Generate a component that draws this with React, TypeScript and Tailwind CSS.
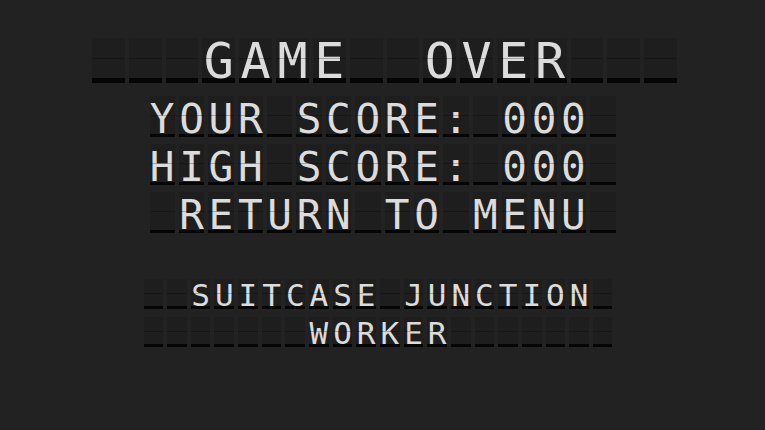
import React from 'react';

type BoardProps = {
    text: string;
    cols: string;
    cell: string;
    glyph: string;
};

function Board({ text, cols, cell, glyph }: BoardProps) {
    return (
        <div className={`grid gap-1 ${cols}`}>
            {text.split('').map((ch, i) => (
                <div
                    key={i}
                    className={`relative flex items-end justify-center bg-[#1e1e1e] border-b-[#050505] ${cell}`}
                >
                    <span className={`leading-none text-[#dcdcdc] ${glyph}`}>
                        {ch === '_' ? '\u00a0' : ch}
                    </span>
                    <span className="absolute inset-x-0 top-1/2 h-px bg-black/25"></span>
                </div>
            ))}
        </div>
    );
}

export default function App() {
    return (
        <div
            className="w-[765px] h-[430px] bg-[#222222] flex flex-col items-center pt-[38px]"
            style={{ fontFamily: '"DejaVu Sans Mono", "Liberation Mono", monospace' }}
        >
            <div className="w-[585px] ml-[4px]">
                <Board
                    text="___GAME__OVER___"
                    cols="grid-cols-16"
                    cell="h-[45px] border-b-[5px]"
                    glyph="text-[50px] mb-[-8px]"
                />
            </div>

            <div className="w-[466px] mt-[13px] flex flex-col gap-[7px]">
                <Board
                    text="YOUR_SCORE:_000_"
                    cols="grid-cols-16"
                    cell="h-[41px] border-b-[3px]"
                    glyph="text-[41px] mb-[-6px]"
                />
                <Board
                    text="HIGH_SCORE:_000_"
                    cols="grid-cols-16"
                    cell="h-[41px] border-b-[3px]"
                    glyph="text-[41px] mb-[-6px]"
                />
                <button className="block w-full text-left">
                    <Board
                        text="_RETURN_TO_MENU_"
                        cols="grid-cols-16"
                        cell="h-[41px] border-b-[3px]"
                        glyph="text-[41px] mb-[-6px]"
                    />
                </button>
            </div>

            <div className="w-[469px] mt-[46px] mr-[9px] flex flex-col gap-[8px]">
                <Board
                    text="__SUITCASE_JUNCTION_"
                    cols="grid-cols-20"
                    cell="h-[30px] border-b-[3px]"
                    glyph="text-[31px] mb-[-5px]"
                />
                <Board
                    text="_______WORKER_______"
                    cols="grid-cols-20"
                    cell="h-[30px] border-b-[3px]"
                    glyph="text-[31px] mb-[-5px]"
                />
            </div>
        </div>
    );
}
